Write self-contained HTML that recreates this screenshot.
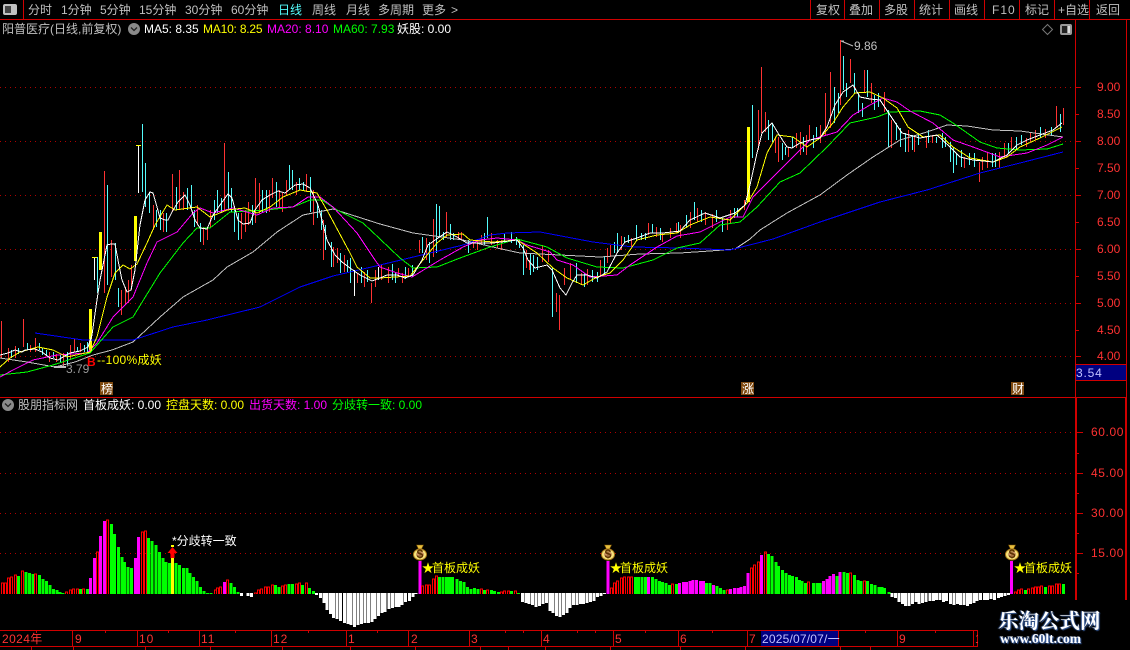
<!DOCTYPE html>
<html><head><meta charset="utf-8">
<style>
html,body{margin:0;padding:0;background:#000;width:1130px;height:650px;overflow:hidden}
svg{position:absolute;left:0;top:0;display:block}
text{font-family:"Liberation Sans","WenQuanYi Zen Hei","Noto Sans CJK SC",sans-serif;font-size:12px;white-space:pre}
.g{fill:#c0c0c0}.w{fill:#fff}.y{fill:#ff0}.m{fill:#f0f}.l{fill:#0f0}.r{fill:#ff3232}.c{fill:#54fcfc}
.wm{position:absolute;color:#fff;font-weight:bold;white-space:nowrap;text-shadow:1px 1px 1px #3a5f9f,-1px 0 1px #3a5f9f}
</style></head><body>
<svg width="1130" height="650" viewBox="0 0 1130 650" xmlns="http://www.w3.org/2000/svg">
<rect width="1130" height="650" fill="#000"/>
<!-- grid -->
<g stroke="#b00000" stroke-dasharray="1 4" fill="none" stroke-width="1" shape-rendering="crispEdges">
<path d="M0 87.5H1075M0 141.5H1075M0 195.5H1075M0 249.5H1075M0 303.5H1075M0 356.5H1075M0 432.5H1075M0 473.5H1075M0 513.5H1075M0 553.5H1075"/>
</g>
<!-- frame -->
<g stroke="#d00000" fill="none" stroke-width="1" shape-rendering="crispEdges">
<path d="M0 19.5H1130M0 397.5H1127M0 630.5H978M0 646.5H978M23.5 0V19M810.5 0V19M844.5 0V19M879.5 0V19M914.5 0V19M949.5 0V19M984.5 0V19M1019.5 0V19M1054.5 0V19M1089.5 0V19M1075.5 19V600M1076.5 397V600M1126.5 19V600M1125.5 397V600M1075 364.5H1127M1075 380.5H1127"/>
<path d="M1075 87.5H1081M1075 114.5H1079M1075 141.5H1081M1075 168.5H1079M1075 195.5H1081M1075 222.5H1079M1075 249.5H1081M1075 276.5H1079M1075 303.5H1081M1075 330.5H1079M1075 356.5H1081M1075 432.5H1083M1075 453.5H1079M1075 473.5H1083M1075 493.5H1079M1075 513.5H1083M1075 533.5H1079M1075 553.5H1083M1075 573.5H1079"/>
<path d="M72.5 630V646M137.5 630V646M199.5 630V646M271.5 630V646M346.5 630V646M408.5 630V646M469.5 630V646M541.5 630V646M613.5 630V646M678.5 630V646M747.5 630V646M838.5 630V646M897.5 630V646M973.5 630V646M977.5 630V646"/>
<path d="M36.5 630V633M105.5 630V633M168.5 630V633M235.5 630V633M308.5 630V633M377.5 630V633M505.5 630V633M523.5 630V633M577.5 630V633M595.5 630V633M645.5 630V633M712.5 630V633M865.5 630V633M935.5 630V633M31.5 646V650M73.5 646V650M145.5 646V650M210.5 646V650M282.5 646V650M350.5 646V650M415.5 646V650M480.5 646V650M508.5 646V650M545.5 646V650M610.5 646V650M680.5 646V650M745.5 646V650M840.5 646V650M870.5 646V650"/>
</g>
<!-- toolbar -->
<rect x="3" y="4" width="14" height="11" rx="2" fill="#c0c0c0"/><rect x="5" y="6" width="6" height="7" fill="#444"/>
<g class="g">
<text x="28" y="14">分时</text><text x="61" y="14">1分钟</text><text x="100" y="14">5分钟</text><text x="139" y="14">15分钟</text><text x="185" y="14">30分钟</text><text x="231" y="14">60分钟</text>
<text x="278" y="14" class="c">日线</text><text x="312" y="14">周线</text><text x="346" y="14">月线</text><text x="378" y="14">多周期</text><text x="422" y="14">更多</text><text x="451" y="14">&gt;</text>
<text x="816" y="14">复权</text><text x="849" y="14">叠加</text><text x="884" y="14">多股</text><text x="919" y="14">统计</text><text x="954" y="14">画线</text><text x="992" y="14" letter-spacing="1">F10</text><text x="1025" y="14">标记</text><text x="1058" y="14">+自选</text><text x="1096" y="14">返回</text>
</g>
<!-- header row -->
<text x="2" y="33" class="g">阳普医疗(日线,前复权)</text>
<circle cx="134" cy="29" r="6" fill="#8a8a8a"/><path d="M131 27.5l3 3 3-3" stroke="#222" stroke-width="1.3" fill="none"/>
<text x="144" y="33" class="w">MA5: 8.35</text><text x="203" y="33" class="y" letter-spacing="-.2">MA10: 8.25</text><text x="267" y="33" class="m">MA20: 8.10</text><text x="333" y="33" class="l">MA60: 7.93</text><text x="397" y="33" class="w">妖股: 0.00</text>
<path d="M1047.5 24.5l5 5-5 5-5-5z" fill="none" stroke="#777"/>
<rect x="1060" y="24" width="12" height="11" rx="2" fill="#999"/><rect x="1062" y="26" width="5" height="7" fill="#222"/><rect x="1068" y="26" width="2" height="7" fill="#ddd"/>
<!-- right axis labels -->
<g class="r" font-size="12">
<text x="1097" y="91">9.00</text><text x="1097" y="118">8.50</text><text x="1097" y="145">8.00</text><text x="1097" y="172">7.50</text><text x="1097" y="199">7.00</text><text x="1097" y="226">6.50</text><text x="1097" y="253">6.00</text><text x="1097" y="280">5.50</text><text x="1097" y="307">5.00</text><text x="1097" y="334">4.50</text><text x="1097" y="360">4.00</text>
<text x="1091" y="436" letter-spacing=".6">60.00</text><text x="1091" y="477" letter-spacing=".6">45.00</text><text x="1091" y="517" letter-spacing=".6">30.00</text><text x="1091" y="557" letter-spacing=".6">15.00</text>
</g>
<rect x="1076" y="365" width="50" height="15" fill="#000080"/><text x="1076" y="377" fill="#c0c0ff" letter-spacing=".8">3.54</text>
<!-- candles -->
<g fill="none" stroke-width="1" shape-rendering="crispEdges" transform="translate(.5 0)">
<path stroke="#ff3232" d="M1 321V358M8 348V362M15 346V358M23 319V347M30 345V352M35 338V352M49 352V362M56 354V362M63 353V368M70 345V360M74 339V352M80 343V352M104 171V293M111 240V277M121 290V315M125 287V305M128 280V303M131 265V290M153 205V230M163 213V232M172 174V212M179 170V210M183 192V210M197 205V225M203 227V245M207 227V240M210 210V227M224 143V210M241 213V239M245 210V232M248 202V225M255 178V223M259 183V213M269 190V212M272 178V198M279 190V208M282 193V212M286 180V195M296 182V195M306 174V192M313 190V225M323 220V260M333 247V267M337 248V263M344 255V272M357 273V283M364 272V287M371 283V303M375 270V287M381 265V280M388 267V283M398 268V277M402 273V283M408 268V277M419 240V253M426 238V260M433 219V257M446 212V237M458 232V240M461 232V240M473 240V248M477 240V250M481 235V245M491 233V245M497 240V248M501 240V250M526 250V268M529 260V270M542 245V262M548 250V262M556 293V312M559 295V330M564 268V285M570 263V280M581 273V285M587 269V285M600 260V277M607 248V263M610 245V257M621 236V250M631 238V248M648 223V235M656 227V237M662 233V242M670 228V238M676 223V233M680 225V238M690 212V228M697 208V222M705 212V225M712 214V228M727 218V230M730 210V223M744 200V210M758 110V150M761 67V133M765 112V132M775 138V153M778 137V162M788 147V157M796 133V148M800 132V155M806 135V155M809 125V140M820 125V143M825 93V135M830 72V128M840 40V105M850 59V83M864 70V93M871 83V103M884 92V112M891 120V148M908 130V152M914 135V152M926 137V148M932 135V143M964 157V168M979 162V182M982 157V170M987 152V168M999 152V168M1004 143V158M1011 137V150M1026 138V147M1030 133V142M1035 130V140M1045 129V138M1056 106V128M1063 108V125"/>
<path stroke="#54fcfc" d="M11 350V358M18 348V354M27 343V350M39 343V350M42 348V355M46 350V355M53 352V358M60 355V362M67 352V365M77 347V352M84 345V352M87 342V352M97 257V293M107 185V285M115 243V280M118 288V307M142 124V192M145 163V207M149 193V213M156 210V227M160 210V230M166 213V232M176 187V210M187 188V210M191 185V207M194 210V227M200 223V242M214 200V220M217 190V213M221 198V213M228 172V210M231 188V212M234 210V232M238 213V240M252 205V225M262 190V213M266 190V213M276 182V207M289 165V190M292 170V190M299 178V190M303 182V190M310 177V212M317 203V218M321 210V230M325 225V250M331 242V267M340 253V273M347 260V273M350 258V283M361 267V283M367 270V282M392 264V280M395 273V283M405 267V279M412 265V277M422 237V253M429 242V263M436 204V253M439 206V237M443 232V240M450 224V240M453 233V240M468 240V253M484 233V245M487 217V238M504 234V243M511 232V243M516 237V245M519 240V248M523 245V275M530 253V275M533 255V272M537 257V270M552 267V317M576 263V283M584 273V287M592 270V282M597 272V282M604 257V273M614 242V253M617 233V253M624 237V243M628 235V243M636 225V240M641 233V240M645 233V240M652 224V233M660 228V240M678 222V233M686 215V228M694 202V220M701 210V222M716 210V222M722 218V232M734 208V218M737 208V217M752 105V158M768 120V140M772 123V142M782 143V160M785 147V155M792 137V148M803 137V152M813 135V148M816 127V137M834 87V123M838 93V113M843 56V90M846 83V97M854 73V93M858 93V113M862 103V117M867 70V97M874 95V110M878 93V107M888 110V147M896 123V140M900 128V147M905 133V152M912 135V150M918 133V145M928 130V143M936 137V143M942 133V148M945 137V147M950 142V162M953 147V173M956 153V165M961 150V167M969 153V165M974 153V167M992 153V167M995 153V167M1008 143V153M1016 137V150M1021 135V145M1040 127V138M1051 127V135M1060 114V132"/>
<path stroke="#fff" d="M94 257V280M138 145V193M354 270V296M378 267V280"/>
</g>
<path d="M89 309h3v43H89zM99 232h3v38H99zM134 216h3v45H134zM747 127h3v75H747z" fill="#ff0"/>
<path d="M92 257.500h5M136 145.500h5" stroke="#ff0" shape-rendering="crispEdges"/>
<!-- moving averages -->
<g fill="none" stroke-width="1" shape-rendering="crispEdges">
<polyline stroke="#c0c0c0" points="0,358 27,362 55,367 75,362 93,355 112,350 133,342 160,317 183,297 213,280 227,267 253,252 277,232 303,215 333,209 380,224 413,233 463,240 497,248 520,253 600,257 640,254 680,253 710,251 735,249 750,239 760,230 787,213 820,195 847,175 873,157 900,140 927,132 947,125 967,126 993,130 1020,131 1063,137"/>
<polyline stroke="#0000ff" points="35,333 83,340 133,340 173,327 207,320 260,307 300,287 333,276 380,265 430,253 463,245 490,235 507,233 540,232 593,242 633,247 680,248 730,250 773,239 820,222 880,202 927,190 980,173 1020,163 1063,152"/>
<polyline stroke="#00ff00" points="0,375 27,372 53,365 90,353 113,327 133,317 160,273 183,243 197,228 210,228 230,212 267,210 293,207 310,200 322,200 337,210 363,223 380,239 400,258 413,268 437,267 460,258 490,247 517,239 547,247 567,258 597,267 623,268 653,260 677,248 700,243 720,225 740,222 757,207 780,182 800,173 827,147 850,123 877,117 890,112 920,111 940,115 953,123 980,142 997,148 1020,150 1047,149 1063,144"/>
<polyline stroke="#ff00ff" points="0,377 13,370 33,360 57,355 87,353 97,343 113,317 133,297 147,263 157,242 177,232 193,213 200,208 213,213 233,208 257,215 273,208 293,207 308,197 320,197 333,207 357,233 375,260 380,267 397,273 412,277 440,260 463,247 480,240 497,238 517,240 527,245 550,252 557,260 573,265 590,277 617,275 630,265 657,247 677,236 700,232 730,217 743,217 753,197 777,173 797,153 810,140 837,132 853,115 870,105 883,98 897,102 910,111 933,123 953,140 973,147 1000,157 1027,153 1047,145 1063,137"/>
<polyline stroke="#ffff00" points="0,367 10,358 20,352 38,347 53,350 67,357 90,352 97,337 107,297 115,273 123,265 130,269 137,264 147,243 155,225 167,205 175,210 197,207 210,217 227,210 245,208 257,213 270,207 283,197 300,190 317,193 328,212 350,253 357,267 370,278 380,278 410,276 423,260 437,243 447,235 463,234 470,240 493,242 517,240 537,253 553,268 567,278 583,285 597,277 610,273 623,260 637,240 657,235 677,233 690,225 710,217 730,220 748,202 757,187 767,153 777,135 793,137 807,147 820,138 833,123 843,107 855,93 870,92 883,98 897,108 908,127 923,137 940,135 953,147 970,158 993,162 1007,157 1020,147 1040,138 1062,127"/>
<polyline stroke="#ffffff" points="0,355 8,353 15,350 22,352 25,350 35,349 42,352 50,358 58,360 70,353 80,351 88,347 92,335 97,300 100,280 104,260 107,245 111,244 115,244 118,260 122,280 127,292 131,290 135,270 140,225 145,200 150,192 153,193 157,207 160,218 165,220 168,220 172,212 178,202 185,195 190,205 195,220 200,228 207,229 213,215 220,205 228,194 232,198 238,220 243,224 250,223 255,210 262,200 270,195 278,191 285,193 295,185 303,184 310,188 318,205 322,220 327,240 335,255 342,262 350,268 360,275 372,281 380,278 387,275 397,275 405,278 413,275 422,260 428,245 438,238 447,232 457,237 467,243 480,243 493,243 517,240 523,248 528,260 535,268 547,265 552,270 560,288 566,295 572,283 577,275 587,275 597,278 607,272 617,253 625,242 637,238 650,233 663,233 680,231 690,220 705,213 720,218 735,213 745,205 750,185 757,153 762,133 772,123 778,133 787,147 792,148 800,143 810,140 820,138 827,127 835,105 843,92 853,85 860,97 870,99 880,100 888,112 902,133 920,138 937,135 950,147 960,157 973,160 993,162 1007,155 1017,145 1027,140 1040,135 1053,130 1062,123"/>
</g>
<!-- chart labels -->
<path d="M841 41h3M841 41l12 5" stroke="#c0c0c0" fill="none"/><text x="854" y="50" class="g">9.86</text>
<path d="M54 367h12" stroke="#c0c0c0" stroke-width="2"/><text x="66" y="373" fill="#999">3.79</text>
<text x="87" y="366" fill="#f00" font-weight="bold" font-size="13">B</text>
<text x="97" y="364" class="y" letter-spacing=".3">--100%成妖</text>
<g fill="#7f4a10"><rect x="100" y="382" width="13" height="13"/><rect x="741" y="382" width="13" height="13"/><rect x="1011" y="382" width="13" height="13"/></g>
<text x="101" y="393" class="w">榜</text><text x="742" y="393" class="w">涨</text><text x="1012" y="393" class="w">财</text>
<!-- lower header -->
<circle cx="8" cy="405" r="6" fill="#8a8a8a"/><path d="M5 403.500l3 3 3-3" stroke="#222" stroke-width="1.3" fill="none"/>
<text x="18" y="409" class="g">股朋指标网</text><text x="83" y="409" class="w">首板成妖: 0.00</text><text x="166" y="409" class="y">控盘天数: 0.00</text><text x="249" y="409" class="m">出货天数: 1.00</text><text x="332" y="409" class="l">分歧转一致: 0.00</text>
<!-- volume-like bars -->
<g fill="none" shape-rendering="crispEdges">
<path stroke="#00ff00" stroke-width="3" d="M18.500 594V576M26 594V572M29.500 594V573M33 594V574M39.500 594V575M43 594V579M46.500 594V581M50 594V585M53.500 594V589M57 594V590M60 594V592M63 594V593M80.500 594V589M87.500 594V589M111.500 594V524M114.500 594V534M118.500 594V547M122 594V557M124.500 594V562M128 594V567M131.500 594V568M148.500 594V538M152 594V541M156 594V545M159.500 594V552M163 594V558M166 594V562M169.500 594V563M176 594V563M179.500 594V565M183.500 594V568M187 594V568M190 594V573M193.500 594V577M197 594V581M200.500 594V587M204 594V591M207.500 594V593M211 594V593M231 594V583M234.500 594V587M238 594V592M275.500 594V585M279 594V587M289 594V584M292.500 594V584M302.500 594V585M309.500 594V588M313.500 594V591M439.500 594V577M443 594V577M446.500 594V577M449.500 594V577M452.500 594V577M457 594V579M460.500 594V581M464 594V582M467.500 594V587M471 594V589M474.500 594V588M478 594V589M484.500 594V590M491.500 594V590M494.500 594V591M498.500 594V592M511.500 594V591M518.500 594V593M635.500 594V577M638.500 594V577M642 594V577M645.500 594V577M652.500 594V577M656 594V579M659.500 594V581M662.500 594V582M666 594V583M669.500 594V585M676.500 594V584M706.500 594V583M710 594V583M717 594V586M720.500 594V588M724 594V590M768.500 594V554M772 594V556M776 594V562M778.500 594V566M782.500 594V570M786 594V573M789.500 594V575M792.500 594V576M796.500 594V577M799.500 594V580M802 594V581M805.500 594V583M813.500 594V583M817 594V583M820 594V583M837 594V576M844 594V572M847.500 594V573M854.500 594V575M858 594V580M861 594V581M867.500 594V581M871.500 594V584M875 594V585M879 594V587M882 594V587M884.500 594V588M889 594V592M1025.500 594V590M1045.500 594V587M1063.500 594V584"/>
<path stroke="#ff00ff" stroke-width="3" d="M90.500 594V578M94.500 594V558M100.500 594V536M104.500 594V521M135.500 594V558M138.500 594V537M224.500 594V582M420 594V561M608 594V561M648.500 594V577M679.500 594V583M683.500 594V582M686.500 594V582M690 594V581M693 594V580M696.500 594V580M700.500 594V581M703.500 594V581M713.500 594V585M730.500 594V589M734.500 594V588M738 594V588M741 594V587M744.500 594V586M748 594V573M761.500 594V555M823.500 594V581M827 594V579M830 594V576M833.500 594V574M840 594V572M1011.500 594V561"/>
<path stroke="#ffffff" stroke-width="3" d="M241.500 593V596M248 593V596M251.500 593V597M316.500 593V595M320.500 593V598M324 593V603M327 593V610M330.500 593V614M333.500 593V618M337 593V619M340.500 593V621M344.500 593V623M348 593V624M351 593V625M354.500 593V627M358 593V625M361.500 593V624M365 593V623M368.500 593V623M372 593V622M375 593V619M378.500 593V616M382 593V613M385 593V612M389 593V609M392.500 593V608M396 593V607M399 593V607M402 593V605M405.500 593V602M409.500 593V601M413 593V597M416 593V594M522.500 593V602M526 593V603M529 593V604M532.500 593V605M536 593V607M539.500 593V606M543 593V604M546.500 593V603M550 593V611M553 593V613M556.500 593V616M560 593V617M563.500 593V615M567 593V613M570 593V608M573.500 593V605M577 593V605M580.500 593V604M583.500 593V604M587 593V603M590.500 593V602M594 593V601M597.500 593V597M601 593V596M604.500 593V594M892 593V597M895.500 593V598M899 593V602M902.500 593V604M905.500 593V606M909 593V606M912.500 593V604M916 593V602M919 593V604M922.500 593V603M926 593V602M930 593V601M933.500 593V601M936.500 593V600M940 593V600M943.500 593V602M946.500 593V601M950.500 593V604M954 593V605M957.500 593V604M960.500 593V605M964 593V605M967.500 593V606M970.500 593V604M974 593V603M977 593V601M980.500 593V600M984.500 593V600M987.500 593V600M991 593V599M994.500 593V600M998.500 593V598M1001.500 593V597M1005 593V596M1008.500 593V595"/>
<path stroke="#ff0000" stroke-width="1" d="M1.500 594V583H3.500V594M4.500 594V583H6.500V594M7.500 594V578H9.500V594M10.500 594V577H12.500V594M14.500 594V575H16.500V594M21.500 594V571H23.500V594M34.500 594V574H36.500V594M65.500 594V592H67.500V594M69.500 594V590H71.500V594M72.500 594V589H74.500V594M76.500 594V589H78.500V594M82.500 594V589H84.500V594M96.500 594V552H98.500V594M106.500 594V520H108.500V594M141.500 594V532H143.500V594M144.500 594V531H146.500V594M214.500 594V590H216.500V594M216.500 594V588H218.500V594M219.500 594V587H221.500V594M226.500 594V580H228.500V594M254.500 594V593H256.500V594M257.500 594V590H259.500V594M260.500 594V589H262.500V594M264.500 594V587H266.500V594M267.500 594V587H269.500V594M271.500 594V585H273.500V594M281.500 594V586H283.500V594M284.500 594V585H286.500V594M295.500 594V584H297.500V594M298.500 594V583H300.500V594M305.500 594V583H307.500V594M421.500 594V586H423.500V594M425.500 594V585H427.500V594M428.500 594V585H430.500V594M432.500 594V579H434.500V594M435.500 594V576H437.500V594M480.500 594V589H482.500V594M486.500 594V590H488.500V594M500.500 594V592H502.500V594M503.500 594V591H505.500V594M507.500 594V591H509.500V594M514.500 594V591H516.500V594M610.500 594V588H612.500V594M613.500 594V583H615.500V594M616.500 594V581H618.500V594M620.500 594V578H622.500V594M623.500 594V577H625.500V594M627.500 594V577H629.500V594M630.500 594V577H632.500V594M671.500 594V584H673.500V594M726.500 594V590H728.500V594M750.500 594V568H752.500V594M753.500 594V565H755.500V594M757.500 594V562H759.500V594M764.500 594V552H766.500V594M807.500 594V582H809.500V594M849.500 594V573H851.500V594M863.500 594V581H865.500V594M1014.500 594V592H1016.500V594M1017.500 594V590H1019.500V594M1020.500 594V589H1022.500V594M1027.500 594V589H1029.500V594M1031.500 594V588H1033.500V594M1034.500 594V587H1036.500V594M1037.500 594V587H1039.500V594M1040.500 594V586H1042.500V594M1048.500 594V586H1050.500V594M1051.500 594V586H1053.500V594M1055.500 594V584H1057.500V594M1058.500 594V584H1060.500V594"/>
<path stroke="#ffff00" stroke-width="3" d="M172.500 594V558"/>
</g>
<rect x="171" y="545" width="3" height="2" fill="#ff0"/>
<path d="M172.500 547l5 6h-3v5h-4v-5h-3z" fill="#f00"/>
<text x="172" y="545" class="w">*分歧转一致</text>
<!-- money bags -->
<g><path d="M416.500 545h7l-2 4h-3z" fill="#e8c040" stroke="#7a5000" stroke-width=".6"/><ellipse cx="420" cy="554.500" rx="6.500" ry="5.500" fill="#f6e27a" stroke="#a87818"/><ellipse cx="420" cy="554.500" rx="4" ry="3.200" fill="#c89060"/><text x="420" y="558" text-anchor="middle" font-size="8" fill="#5a3000" font-weight="bold">$</text></g>
<g><path d="M604.500 545h7l-2 4h-3z" fill="#e8c040" stroke="#7a5000" stroke-width=".6"/><ellipse cx="608" cy="554.500" rx="6.500" ry="5.500" fill="#f6e27a" stroke="#a87818"/><ellipse cx="608" cy="554.500" rx="4" ry="3.200" fill="#c89060"/><text x="608" y="558" text-anchor="middle" font-size="8" fill="#5a3000" font-weight="bold">$</text></g>
<g><path d="M1008.500 545h7l-2 4h-3z" fill="#e8c040" stroke="#7a5000" stroke-width=".6"/><ellipse cx="1012" cy="554.500" rx="6.500" ry="5.500" fill="#f6e27a" stroke="#a87818"/><ellipse cx="1012" cy="554.500" rx="4" ry="3.200" fill="#c89060"/><text x="1012" y="558" text-anchor="middle" font-size="8" fill="#5a3000" font-weight="bold">$</text></g>
<text x="422" y="572" class="y">★</text><text x="432" y="572" class="y">首板成妖</text>
<text x="610" y="572" class="y">★</text><text x="620" y="572" class="y">首板成妖</text>
<text x="1014" y="572" class="y">★</text><text x="1024" y="572" class="y">首板成妖</text>
<!-- time axis -->
<rect x="761" y="631" width="77" height="15" fill="#000080"/>
<g class="r">
<text x="2" y="643" letter-spacing=".4">2024年</text><text x="75" y="643">9</text><text x="139" y="643" letter-spacing="1">10</text><text x="201" y="643" letter-spacing="1">11</text><text x="273" y="643" letter-spacing="1">12</text><text x="348" y="643">1</text><text x="411" y="643">2</text><text x="471" y="643">3</text><text x="543" y="643">4</text><text x="615" y="643">5</text><text x="680" y="643">6</text><text x="749" y="643">7</text><text x="899" y="643">9</text><text x="975" y="643">1</text>
</g>
<text x="762" y="643" fill="#c0c0ff" letter-spacing=".2">2025/07/07/一</text>
<!-- watermark backing -->
<rect x="1006" y="600" width="124" height="50" fill="#000"/>
<rect x="978" y="608" width="152" height="42" fill="#000"/>
</svg>
<div class="wm" style="left:998px;top:606px;font-family:'Noto Serif CJK SC','Liberation Serif',serif;font-size:20.500px;line-height:26px">乐淘公式网</div>
<div class="wm" style="left:1000px;top:631px;font-family:'Liberation Serif',serif;font-size:13.500px;line-height:16px">www.60lt.com</div>
</body></html>
